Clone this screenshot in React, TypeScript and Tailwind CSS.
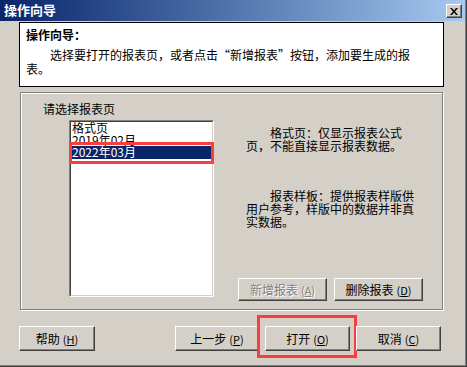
import React from "react";

const btnBase =
  "relative flex items-center justify-center bg-[#d4d0c8] border border-t-white border-l-white border-r-[#404040] border-b-[#404040] shadow-[inset_-1px_-1px_0_#808080] text-[12px] leading-[14px] text-black";

function Mn({ l }: { l: string }) {
  return (
    <span className="ml-[3px] text-[11px]">
      (<span className="underline underline-offset-1">{l}</span>)
    </span>
  );
}

export default function App() {
  return (
    <div className="w-[467px] h-[367px] bg-[#d4d0c8] border-r border-b border-r-[#404040] border-b-[#404040] shadow-[inset_-1px_-1px_0_#808080] overflow-hidden font-['Noto_Sans_CJK_SC',sans-serif] text-black flex flex-col">
      {/* Title bar */}
      <div className="h-[21px] mr-[1px] shrink-0 flex items-start justify-between pl-[4px] pr-[3px] bg-gradient-to-r from-[#0a246a] to-[#a6caf0]">
        <div className="text-white font-bold text-[13px] leading-[19px]">操作向导</div>
        <div className="mt-[4px] w-[16px] h-[14px] flex items-center justify-center bg-[#d4d0c8] border border-t-white border-l-white border-r-[#404040] border-b-[#404040] shadow-[inset_-1px_-1px_0_#808080]">
          <svg width="8" height="7" viewBox="0 0 8 7">
            <path d="M0 0h2l2 2.5L6 0h2L5 3.5 8 7H6L4 4.5 2 7H0l3-3.5z" fill="#000" />
          </svg>
        </div>
      </div>

      {/* Info box */}
      <div className="mt-[1px] ml-[19px] w-[425px] h-[65px] shrink-0 border border-black bg-white px-[6px] pt-[5px] text-[12px]">
        <div className="font-bold leading-[14px]">操作向导：</div>
        <div className="mt-[6px] leading-[14px] whitespace-nowrap pl-[24px]">
          选择要打开的报表页，或者点击“新增报表”按钮，添加要生成的报
        </div>
        <div className="leading-[14px] whitespace-nowrap">表。</div>
      </div>

      {/* Group box */}
      <div className="mt-[5px] ml-[20px] w-[423px] h-[218px] shrink-0 border border-[#808080] shadow-[inset_1px_1px_0_#fff,1px_1px_0_#fff] flex flex-col text-[12px]">
        <div className="mt-[9px] pl-[22px] leading-[14px]">请选择报表页</div>
        <div className="mt-[4px] flex">
          {/* Listbox */}
          <div className="relative ml-[48px] w-[145px] h-[177px] border border-t-[#808080] border-l-[#808080] border-r-white border-b-white">
            <div className="w-full h-full border border-t-[#404040] border-l-[#404040] border-r-[#d4d0c8] border-b-[#d4d0c8] bg-white">
              <div className="h-[12px] leading-[12px] pl-[1px] whitespace-nowrap">格式页</div>
              <div className="h-[12px] leading-[12px] pl-[1px] whitespace-nowrap">2019年02月</div>
              <div className="ml-[1px] h-[13px] leading-[12px] bg-[#0a246a] text-white whitespace-nowrap">2022年03月</div>
            </div>
            <div className="absolute left-[-1px] top-[21px] w-[145px] h-[22px] border-[3px] border-[#fb3d3d]" />
          </div>

          {/* Right column */}
          <div className="flex flex-col">
            <div className="ml-[32px] mt-[6px] leading-[13px] whitespace-nowrap">
              <div className="pl-[24px]">格式页：仅显示报表公式</div>
              <div>页，不能直接显示报表数据。</div>
            </div>
            <div className="ml-[32px] mt-[37px] leading-[13px] whitespace-nowrap">
              <div className="pl-[24px]">报表样板：提供报表样版供</div>
              <div>用户参考，样版中的数据并非真</div>
              <div>实数据。</div>
            </div>
            <div className="ml-[24px] mt-[50px] flex gap-[7px]">
              <div className={`${btnBase} w-[89px] h-[23px] !text-[#808080] [text-shadow:1px_1px_0_#fff]`}>
                新增报表<Mn l="A" />
              </div>
              <div className={`${btnBase} w-[89px] h-[23px]`}>
                删除报表<Mn l="D" />
              </div>
            </div>
          </div>
        </div>
      </div>

      {/* Bottom buttons */}
      <div className="mt-[16px] flex shrink-0">
        <div className={`${btnBase} ml-[19px] w-[76px] h-[25px]`}>
          帮助<Mn l="H" />
        </div>
        <div className={`${btnBase} ml-[80px] w-[84px] h-[25px]`}>
          上一步<Mn l="P" />
        </div>
        <div className={`${btnBase} ml-[6px] w-[85px] h-[25px]`}>
          打开<Mn l="O" />
          <div className="absolute left-[-9px] top-[-12px] w-[100px] h-[43px] border-[3px] border-[#fb3d3d]" />
        </div>
        <div className={`${btnBase} ml-[6px] w-[85px] h-[25px]`}>
          取消<Mn l="C" />
        </div>
      </div>
    </div>
  );
}
